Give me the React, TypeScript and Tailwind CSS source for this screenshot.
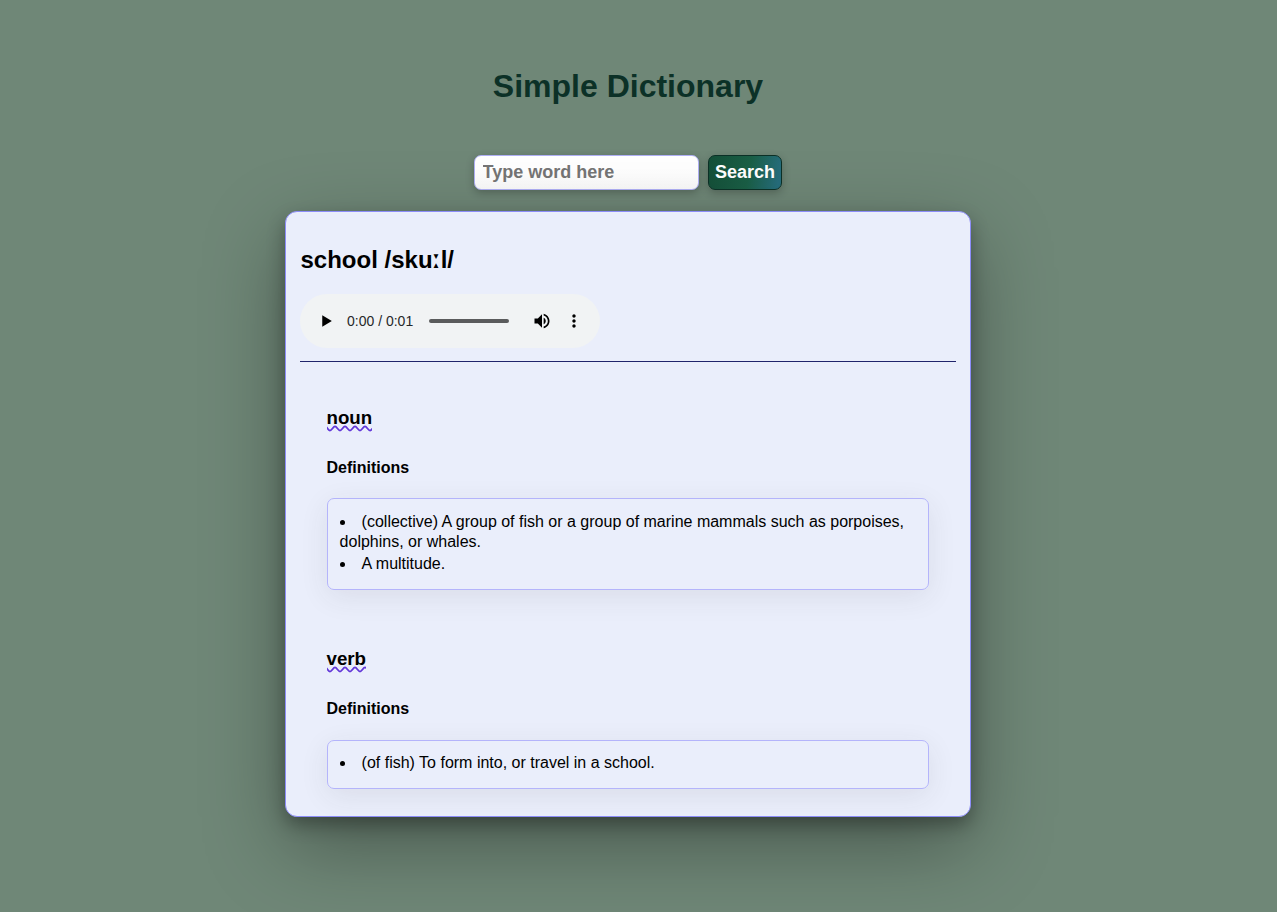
const entries = [
  {
    part: 'noun',
    definitions: [
      '(collective) A group of fish or a group of marine mammals such as porpoises, dolphins, or whales.',
      'A multitude.',
    ],
    box: 'mt-5 h-[92px] pt-[13px]',
  },
  {
    part: 'verb',
    definitions: ['(of fish) To form into, or travel in a school.'],
    box: 'mt-[21px] h-[49px] pt-3',
  },
];

function AudioPlayer() {
  return (
    <div className="flex h-[54px] w-[300px] items-center rounded-full bg-[#f1f3f4] pl-4">
      <svg className="size-5 shrink-0" viewBox="0 0 24 24">
        <path d="M7.5 5v14l11.5-7z" />
      </svg>
      <span className="ml-[11px] w-[82px] text-sm leading-none whitespace-nowrap text-[#272829]">0:00 / 0:01</span>
      <div className="h-1 w-20 rounded-full bg-[#5a5b5c]" />
      <svg className="ml-[23px] size-5 shrink-0" viewBox="0 0 24 24">
        <path d="M3 9v6h4l5 5V4L7 9H3zm13.5 3c0-1.77-1.02-3.29-2.5-4.03v8.05c1.48-.73 2.5-2.25 2.5-4.02zM14 3.23v2.06c2.89.86 5 3.54 5 6.71s-2.11 5.85-5 6.71v2.06c4.01-.91 7-4.49 7-8.77s-2.99-7.86-7-8.77z" />
      </svg>
      <svg className="ml-3 size-5 shrink-0" viewBox="0 0 24 24">
        <path d="M12 8c1.1 0 2-.9 2-2s-.9-2-2-2-2 .9-2 2 .9 2 2 2zm0 2c-1.1 0-2 .9-2 2s.9 2 2 2 2-.9 2-2-.9-2-2-2zm0 6c-1.1 0-2 .9-2 2s.9 2 2 2 2-.9 2-2-.9-2-2-2z" />
      </svg>
    </div>
  );
}

function Wave() {
  return (
    <svg className="absolute top-[19px] left-0 h-[7px] w-full" fill="none" stroke="#6338d9" strokeWidth="1.8">
      <path d="M-2 1.4C-.2 1.4 1.2 5.6 3 5.6S6.2 1.4 8 1.4S11.2 5.6 13 5.6S16.2 1.4 18 1.4S21.2 5.6 23 5.6S26.2 1.4 28 1.4S31.2 5.6 33 5.6S36.2 1.4 38 1.4S41.2 5.6 43 5.6S46.2 1.4 48 1.4" />
    </svg>
  );
}

export default function App() {
  return (
    <div className="flex h-[912px] flex-col items-center overflow-hidden bg-[#6f8777] pr-[21px] font-['Liberation_Sans',Arial,sans-serif] text-black">
      <h1 className="mt-[66px] text-[32px] leading-10 font-bold text-[#0c3127]">Simple Dictionary</h1>
      <div className="mt-[49px] flex gap-[9px]">
        <input
          className="h-[35px] w-[225px] rounded-[7px] border border-[#b0b0f5] bg-linear-to-b from-white from-40% to-[#fbfbfb] pr-2 pl-[7.5px] text-lg font-bold shadow-[0_3px_8px_rgba(0,0,0,0.24)] placeholder:text-[#757575]"
          placeholder="Type word here"
        />
        <button className="h-[35px] w-[74px] rounded-[7px] border border-[#0c3127] bg-linear-[100deg,#144f38_0%,#1a5f46_55%,#266d7c_95%] pb-0.5 text-lg leading-none font-bold text-white shadow-[0_3px_8px_rgba(0,0,0,0.24)]">
          Search
        </button>
      </div>
      <main className="mt-[21px] h-[606px] w-[686px] rounded-[12px] border border-[#8c8cf8] bg-[#eaeefb] px-[14px] shadow-[0_28px_80px_rgba(0,0,0,0.34),0_8px_18px_rgba(0,0,0,0.3)]">
        <h2 className="mt-[33px] pl-[0.5px] text-2xl leading-[30px] font-bold">
          school /sku<span className="font-['DejaVu_Sans'] leading-none">ː</span>l/
        </h2>
        <div className="mt-[19px]">
          <AudioPlayer />
        </div>
        <hr className="mt-[13px] border-[#20246b]" />
        <div className="px-[27px] pt-[44px]">
          {entries.map((entry) => (
            <section key={entry.part} className="mb-[57px]">
              <h3 className="relative -ml-[0.5px] w-fit text-[18.72px] leading-6 font-bold">
                {entry.part}
                <Wave />
              </h3>
              <h4 className="mt-7 -ml-[0.5px] text-base leading-5 font-bold">Definitions</h4>
              <ul
                className={`${entry.box} list-inside list-disc space-y-0.5 rounded-[7px] border border-[#b4b4fb] pr-3 pl-[11.6px] text-base leading-5 shadow-[0_7px_29px_rgba(60,60,50,0.09)]`}
              >
                {entry.definitions.map((text) => (
                  <li key={text}>{text}</li>
                ))}
              </ul>
            </section>
          ))}
        </div>
      </main>
    </div>
  );
}
